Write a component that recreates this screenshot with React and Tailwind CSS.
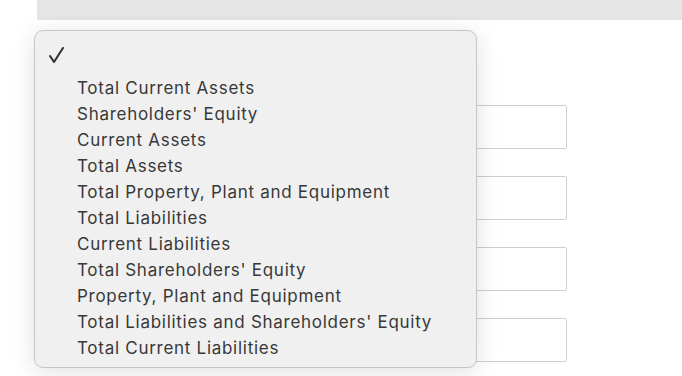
import React from 'react';

const options = [
  'Total Current Assets',
  "Shareholders' Equity",
  'Current Assets',
  'Total Assets',
  'Total Property, Plant and Equipment',
  'Total Liabilities',
  'Current Liabilities',
  "Total Shareholders' Equity",
  'Property, Plant and Equipment',
  "Total Liabilities and Shareholders' Equity",
  'Total Current Liabilities',
];

function App() {
  return (
    <div className="relative w-[682px] h-[376px] overflow-hidden bg-white font-['Inter',sans-serif]">
      {/* header strip */}
      <div className="ml-[37px] h-[20px] bg-[#e5e5e5]"></div>

      {/* form inputs behind the menu */}
      <div className="ml-[267px] mt-[85px] flex w-[300px] flex-col gap-[27px]">
        <div className="h-[44px] rounded-[2px] border border-[#cfcfcf] bg-white"></div>
        <div className="h-[44px] rounded-[2px] border border-[#cfcfcf] bg-white"></div>
        <div className="h-[44px] rounded-[2px] border border-[#cfcfcf] bg-white"></div>
        <div className="h-[44px] rounded-[2px] border border-[#cfcfcf] bg-white"></div>
      </div>

      {/* open select menu */}
      <div className="absolute left-[34px] top-[30px] w-[443px] rounded-[9px] border border-[#c6c6c6] bg-[#f0f0f0] pt-[11px] pb-[6px] shadow-[0_4px_24px_rgba(0,0,0,0.12)]">
        <div className="flex h-[26px] items-center pl-[13px]">
          <svg width="17" height="18" viewBox="0 0 17 18" className="text-[#333]">
            <path d="M2 10 L6 16 L15 2" fill="none" stroke="currentColor" strokeWidth="2.1" strokeLinecap="round" strokeLinejoin="round" />
          </svg>
        </div>
        <ul className="mt-[7px]">
          {options.map(opt => (
            <li key={opt} className="h-[26px] pl-[42px] text-[17px] leading-[26px] tracking-[0.72px] text-[#383838]">
              {opt}
            </li>
          ))}
        </ul>
      </div>
    </div>
  );
}

export default App;
